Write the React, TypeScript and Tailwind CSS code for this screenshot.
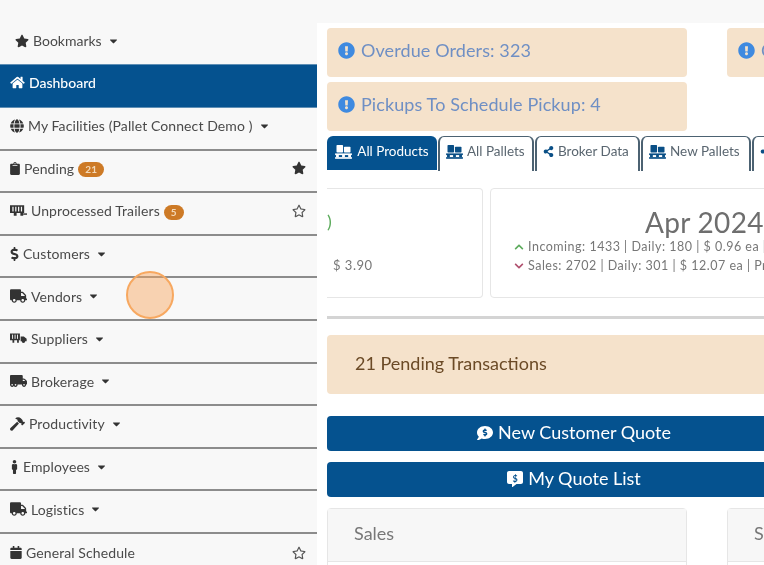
import type { ReactNode } from "react";
import {
  FaCalendar,
  FaCaretDown,
  FaChevronDown,
  FaChevronUp,
  FaClipboard,
  FaCommentAlt,
  FaCommentDollar,
  FaDollarSign,
  FaExclamationCircle,
  FaGlobe,
  FaHammer,
  FaHome,
  FaMale,
  FaRegStar,
  FaShareAlt,
  FaStar,
  FaTruck,
  FaTruckMoving,
} from "react-icons/fa";

const PalletIcon = () => (
  <svg viewBox="0 0 18 15" className="h-[14px] w-[17px] fill-current">
    <rect x="1.500" y="0" width="7" height="8" rx="0.800" />
    <rect x="9.500" y="2" width="7" height="6" rx="0.800" />
    <rect x="0" y="9" width="18" height="1.800" />
    <rect x="0" y="13" width="18" height="1.800" />
    <rect x="1" y="10" width="3" height="3" />
    <rect x="7.500" y="10" width="3" height="3" />
    <rect x="14" y="10" width="3" height="3" />
  </svg>
);

const TrailerIcon = () => (
  <svg viewBox="0 0 18 12" className="h-[12px] w-[17px] fill-current">
    <path d="M0 0h15v8h-1v3h-3V8H7v3H4V8H0z" />
    <rect x="2.500" y="1.500" width="1.300" height="5" fill="#f8f8f8" />
    <rect x="5.500" y="1.500" width="1.300" height="5" fill="#f8f8f8" />
    <rect x="8.500" y="1.500" width="1.300" height="5" fill="#f8f8f8" />
    <rect x="11.500" y="1.500" width="1.300" height="5" fill="#f8f8f8" />
    <rect x="14" y="8.500" width="4" height="1.500" />
  </svg>
);

const SupplierIcon = () => (
  <svg viewBox="0 0 24 14" className="h-[13px] w-[17px] fill-current">
    <path d="M0 0h14v9.500h-1.500V13H10V9.500H6V13H3.500V9.500H0z" />
    <rect x="3" y="1.500" width="1.300" height="6" fill="#f8f8f8" />
    <rect x="6.500" y="1.500" width="1.300" height="6" fill="#f8f8f8" />
    <rect x="10" y="1.500" width="1.300" height="6" fill="#f8f8f8" />
    <path d="M15 4h4.500l4 3.500V11h-2a2.500 2.500 0 0 1-5 0H15z" />
  </svg>
);

const Caret = () => <FaCaretDown className="ml-[7px] h-3 w-[9px] shrink-0 text-[#333]" />;

type Row = {
  icon: ReactNode;
  label: string;
  caret?: boolean;
  badge?: string;
  star?: "solid" | "outline";
};

const rows: Row[] = [
  { icon: <FaGlobe className="h-[14px] w-[14px]" />, label: "My Facilities (Pallet Connect Demo )", caret: true },
  { icon: <FaClipboard className="h-[13px] w-[10px]" />, label: "Pending", badge: "21", star: "solid" },
  { icon: <TrailerIcon />, label: "Unprocessed Trailers", badge: "5", star: "outline" },
  { icon: <FaDollarSign className="h-[14px] w-[9px]" />, label: "Customers", caret: true },
  { icon: <FaTruck className="h-[14px] w-[17px]" />, label: "Vendors", caret: true },
  { icon: <SupplierIcon />, label: "Suppliers", caret: true },
  { icon: <FaTruckMoving className="h-[14px] w-[17px]" />, label: "Brokerage", caret: true },
  { icon: <FaHammer className="h-[14px] w-[15px]" />, label: "Productivity", caret: true },
  { icon: <FaMale className="h-[14px] w-[9px]" />, label: "Employees", caret: true },
  { icon: <FaTruck className="h-[14px] w-[17px]" />, label: "Logistics", caret: true },
  { icon: <FaCalendar className="h-[13px] w-3" />, label: "General Schedule", star: "outline" },
];

const SideRow = ({ row }: { row: Row }) => (
  <div className="flex h-[42.6px] shrink-0 items-center border-b-2 border-[#8c8c8c] pb-[5px] pl-[10px] pr-[11px] text-[14px] tracking-[0.1px] text-[#4a4a4a] last:border-b-0">
    <span className="mr-[4px] flex shrink-0 items-center text-[#333]">{row.icon}</span>
    <span className="whitespace-nowrap">{row.label}</span>
    {row.caret && <Caret />}
    {row.badge && (
      <span className="ml-[4px] mt-[3px] rounded-full bg-[#cd7a26] px-[7px] text-[10px] font-bold leading-[15px] text-[#f3d9b8]">
        {row.badge}
      </span>
    )}
    {row.star === "solid" && <FaStar className="ml-auto h-[14px] w-[14px] text-[#333]" />}
    {row.star === "outline" && <FaRegStar className="ml-auto h-[14px] w-[14px] text-[#555]" />}
  </div>
);

const Sidebar = () => (
  <aside className="flex h-full w-[317px] shrink-0 flex-col bg-[#f8f8f8] pt-[20px]">
    <div className="flex h-[44px] shrink-0 items-center pb-[3px] pl-[15px] text-[14px] text-[#4a4a4a]">
      <FaStar className="mr-[4px] h-[14px] w-[14px] text-[#333]" />
      Bookmarks
      <Caret />
    </div>
    <div className="flex h-[44px] shrink-0 items-center border-y border-[#5f8fb5] bg-[#05528f] pb-[8px] pl-[10px] text-[14px] font-medium text-white">
      <FaHome className="mr-[4px] h-[13px] w-[15px]" />
      Dashboard
    </div>
    {rows.map((row) => (
      <SideRow key={row.label} row={row} />
    ))}
  </aside>
);

const Alert = ({ text }: { text: string }) => (
  <div className="flex h-[49px] items-center rounded-[4px] bg-[#f5e2cb] pb-[5px] pl-[11px] text-[18px] tracking-[0.1px] text-[#6f8fc4]">
    <FaExclamationCircle className="mr-[6px] h-[17px] w-[17px] shrink-0 text-[#3f8ae0]" />
    <span className="whitespace-nowrap">{text}</span>
  </div>
);

const tabs = [
  { icon: <PalletIcon />, label: "All Products", active: true, w: "w-[110px]" },
  { icon: <PalletIcon />, label: "All Pallets", w: "w-[96px]" },
  { icon: <FaShareAlt className="h-[11px] w-[11px]" />, label: "Broker Data", w: "w-[105px]" },
  { icon: <PalletIcon />, label: "New Pallets", w: "w-[110px]" },
  { icon: <FaShareAlt className="h-[11px] w-[11px]" />, label: "", w: "w-[40px]" },
];

const Tabs = () => (
  <div className="mt-[5px] flex h-[35px] gap-[1px] overflow-hidden">
    {tabs.map((t) =>
      t.active ? (
        <div
          key={t.label}
          className={`${t.w} flex h-[34px] shrink-0 items-center justify-center gap-[5px] rounded-t-[6px] bg-[#05528f] pb-[3px] text-[13.5px] text-white`}
        >
          {t.icon}
          {t.label}
        </div>
      ) : (
        <div
          key={t.w}
          className={`${t.w} flex shrink-0 items-center justify-start gap-[4px] rounded-t-[6px] border-x-2 border-t border-[#4c6272] pb-[5px] pl-[6px] text-[13.5px] text-[#5a6670]`}
        >
          <span className="text-[#0a4f86]">{t.icon}</span>
          {t.label}
        </div>
      ),
    )}
  </div>
);

const StatCards = () => (
  <div className="mt-[17px] flex gap-[7px] overflow-hidden">
    <div className="flex h-[110px] w-[156px] shrink-0 flex-col rounded-r-[4px] border-y border-r border-[#e6e6e6] text-[13px] text-[#777]">
      <span className="pt-[19px] text-[18px] leading-[26px] text-[#5cab5c]">)</span>
      <span className="mt-[22px] pl-[6px] tracking-[0.5px]">$ 3.90</span>
    </div>
    <div className="h-[110px] w-[400px] shrink-0 rounded-[4px] border border-[#e6e6e6]">
      <div className="whitespace-nowrap pl-[154px] pt-[14px] text-[28px] leading-[38px] tracking-[0.3px] text-[#6e6e6e]">
        Apr 2024
      </div>
      <div className="mt-[-4px] flex items-center whitespace-nowrap pl-[22px] text-[12.5px] leading-[19px] tracking-[0.5px] text-[#777]">
        <FaChevronUp className="mr-[3px] h-[10px] w-[12px] text-[#5cab5c]" />
        Incoming: 1433 | Daily: 180 | $ 0.96 ea | Profit
      </div>
      <div className="flex items-center whitespace-nowrap pl-[22px] text-[12.5px] leading-[19px] tracking-[0.5px] text-[#777]">
        <FaChevronDown className="mr-[3px] h-[10px] w-[12px] text-[#b0506e]" />
        Sales: 2702 | Daily: 301 | $ 12.07 ea | Profit
      </div>
    </div>
  </div>
);

const BlueButton = ({ icon, label }: { icon: ReactNode; label: string }) => (
  <div className="flex h-[35px] items-center justify-center gap-[5px] rounded-[4px] bg-[#05528f] pb-[2px] text-[18px] text-white">
    {icon}
    {label}
  </div>
);

const QuoteIcon = () => (
  <span className="relative flex h-[16px] w-[16px] items-center justify-center">
    <FaCommentAlt className="h-[16px] w-[16px]" />
    <span className="absolute top-[1px] text-[9px] font-bold text-[#05528f]">$</span>
  </span>
);

const QuoteCard = ({ label }: { label: string }) => (
  <div className="h-[70px] rounded-t-[4px] border border-[#e6e6e6]">
    <div className="h-[53px] border-b border-[#e6e6e6] bg-[#f7f7f7] pl-[26px] pt-[11px] text-[18px] leading-[26px] text-[#777]">
      {label}
    </div>
  </div>
);

export default function App() {
  return (
    <div className="relative flex h-[565px] w-[764px] overflow-hidden bg-white font-['Lato',sans-serif] blur-[0.4px]">
      <Sidebar />
      <main className="flex w-[447px] shrink-0 flex-col">
        <div className="h-[23px] shrink-0 bg-[#f8f8f8]" />
        <div className="flex w-[447px] flex-col pl-[10px]">
          <div className="mt-[5px] grid w-[480px] grid-cols-[360px_360px] gap-x-[40px] gap-y-[5px]">
            <Alert text="Overdue Orders: 323" />
            <Alert text="Open Orders: 12" />
            <Alert text="Pickups To Schedule Pickup: 4" />
          </div>
          <Tabs />
          <StatCards />
          <div className="mt-[18px] h-[3px] bg-[#d4d4d4]" />
          <div className="mt-[16px] flex h-[59px] items-center rounded-l-[4px] bg-[#f5e2cb] pb-[3px] pl-[28px] text-[18px] text-[#6b4a26]">
            21 Pending Transactions
          </div>
          <div className="mt-[22px] flex w-[494px] flex-col gap-[11px]">
            <BlueButton icon={<FaCommentDollar className="h-4 w-4" />} label="New Customer Quote" />
            <BlueButton icon={<QuoteIcon />} label="My Quote List" />
          </div>
          <div className="mt-[11px] grid w-[760px] grid-cols-[360px_360px] gap-x-[40px]">
            <QuoteCard label="Sales" />
            <QuoteCard label="Suppliers" />
          </div>
        </div>
      </main>
      <div className="absolute left-[126px] top-[271px] h-[48px] w-[48px] rounded-full border-2 border-[#f7a860] bg-[#f9a35a]/45" />
    </div>
  );
}
